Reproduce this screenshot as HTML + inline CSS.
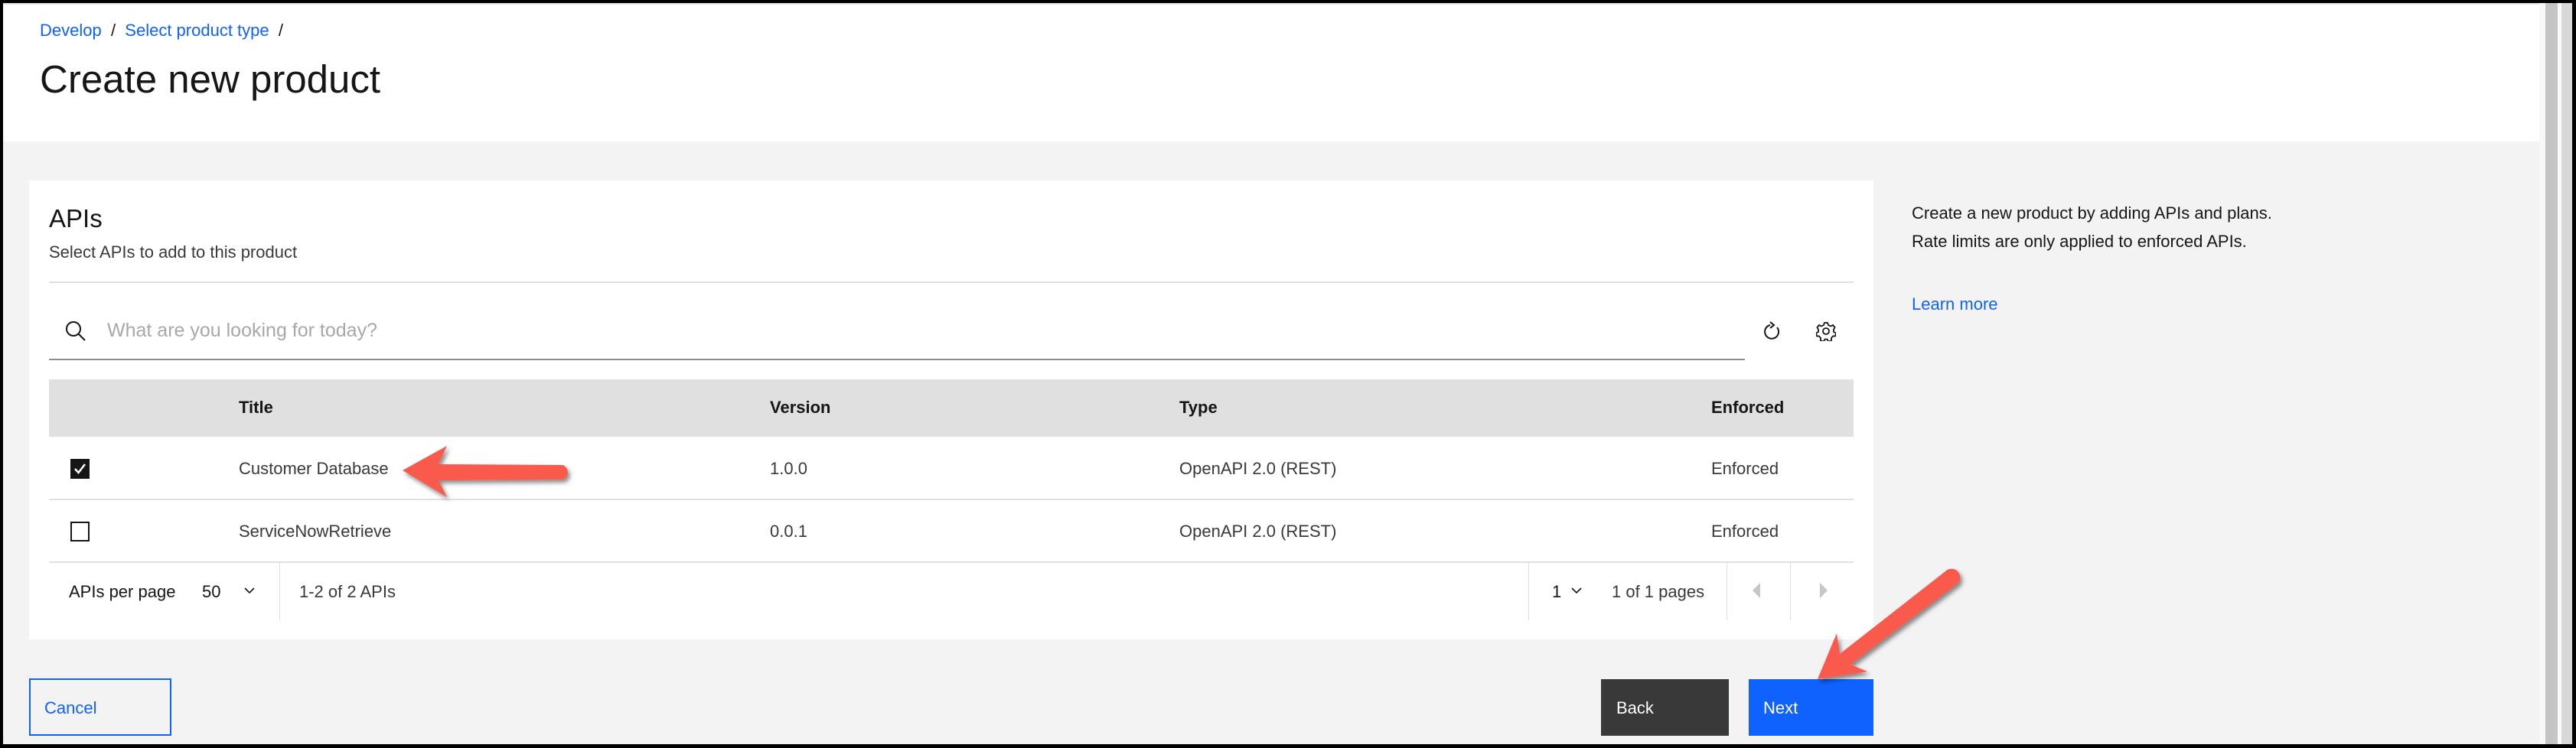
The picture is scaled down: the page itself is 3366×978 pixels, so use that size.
<!DOCTYPE html>
<html><head><meta charset="utf-8"><style>
*{margin:0;padding:0;box-sizing:border-box}
body{width:3366px;height:978px;background:#000;position:relative;overflow:hidden;font-family:"Liberation Sans",sans-serif;color:#161616}
.a{position:absolute;white-space:nowrap}
.t{font-size:22px;line-height:1}
</style></head><body>
<div class="a" style="left:4px;top:4px;width:3314px;height:969px;background:#f3f3f3"></div>
<div class="a" style="left:4px;top:4px;width:3314px;height:181px;background:#fff;border-top:2px solid #e4e4e4"></div>
<div class="a" style="left:3318px;top:4px;width:8px;height:969px;background:#f8f8f8"></div>
<div class="a" style="left:3326px;top:4px;width:16px;height:969px;background:#c4c4c4"></div>
<div class="a" style="left:3342px;top:4px;width:5px;height:969px;background:#fafafa"></div>
<div class="a" style="left:3347px;top:4px;width:14px;height:969px;background:#d8d8d8"></div>

<div class="a t" style="left:52px;top:29px;color:#0f62fe">Develop <span style="color:#161616">&nbsp;/&nbsp;</span> Select product type <span style="color:#161616">&nbsp;/</span></div>
<div class="a" style="left:52px;top:76px;font-size:51px;line-height:1.1">Create new product</div>

<div class="a" style="left:38px;top:236px;width:2410px;height:600px;background:#fff"></div>
<div class="a" style="left:64px;top:267px;font-size:33px">APIs</div>
<div class="a t" style="left:64px;top:319px;color:#393939">Select APIs to add to this product</div>
<div class="a" style="left:64px;top:368px;width:2358px;height:2px;background:#e0e0e0"></div>
<svg class="a" style="left:84px;top:418px" width="30" height="30" viewBox="0 0 30 30"><circle cx="12" cy="12" r="9" fill="none" stroke="#161616" stroke-width="2"/><path d="M18.5 18.5L27 27" stroke="#161616" stroke-width="2"/></svg>
<div class="a t" style="left:140px;top:420px;font-size:25px;color:#a8a8a8">What are you looking for today?</div>
<div class="a" style="left:64px;top:469px;width:2216px;height:2px;background:#8d8d8d"></div>
<svg class="a" style="left:2304px;top:420px" width="26" height="28" viewBox="0 0 26 28"><path d="M18 8A9 9 0 1 1 9 5" fill="none" stroke="#161616" stroke-width="2"/><path d="M9 1l5 4-5 4" fill="none" stroke="#161616" stroke-width="2"/></svg>
<svg class="a" style="left:2373px;top:420px" width="26" height="26" viewBox="0 0 26 26"><path d="M11 2h4l1 3 3 1.5 3-1.5 2.5 3-1.5 3v3l3 1.5-1 4-3 0-2 2.5v3.5l-4 1-1.5-3h-3l-1.5 3-4-1v-3.5l-2-2.5-3 0-1-4 3-1.5v-3l-1.5-3 2.5-3 3 1.5 3-1.5z" fill="none" stroke="#161616" stroke-width="1.8"/><circle cx="13" cy="13" r="4" fill="none" stroke="#161616" stroke-width="1.8"/></svg>

<div class="a" style="left:64px;top:496px;width:2358px;height:75px;background:#e0e0e0"></div>
<div class="a t" style="left:312px;top:522px;font-weight:bold">Title</div>
<div class="a t" style="left:1006px;top:522px;font-weight:bold">Version</div>
<div class="a t" style="left:1541px;top:522px;font-weight:bold">Type</div>
<div class="a t" style="left:2236px;top:522px;font-weight:bold">Enforced</div>

<div class="a" style="left:92px;top:600px;width:25px;height:26px;background:#161616"></div>
<svg class="a" style="left:92px;top:600px" width="25" height="26"><path d="M6 13l4.5 5L19 7" fill="none" stroke="#fff" stroke-width="2.5"/></svg>
<div class="a t" style="left:312px;top:602px;color:#393939">Customer Database</div>
<div class="a t" style="left:1006px;top:602px;color:#393939">1.0.0</div>
<div class="a t" style="left:1541px;top:602px;color:#393939">OpenAPI 2.0 (REST)</div>
<div class="a t" style="left:2236px;top:602px;color:#393939">Enforced</div>
<div class="a" style="left:64px;top:652px;width:2358px;height:2px;background:#e0e0e0"></div>
<div class="a" style="left:92px;top:682px;width:25px;height:26px;border:2px solid #161616"></div>
<div class="a t" style="left:312px;top:684px;color:#393939">ServiceNowRetrieve</div>
<div class="a t" style="left:1006px;top:684px;color:#393939">0.0.1</div>
<div class="a t" style="left:1541px;top:684px;color:#393939">OpenAPI 2.0 (REST)</div>
<div class="a t" style="left:2236px;top:684px;color:#393939">Enforced</div>
<div class="a" style="left:64px;top:734px;width:2358px;height:2px;background:#e0e0e0"></div>

<div class="a t" style="left:90px;top:763px">APIs per page</div>
<div class="a t" style="left:264px;top:763px">50</div>
<svg class="a" style="left:318px;top:764px" width="16" height="16"><path d="M2 5l6 6 6-6" fill="none" stroke="#161616" stroke-width="1.6"/></svg>
<div class="a" style="left:365px;top:736px;width:1px;height:75px;background:#e0e0e0"></div>
<div class="a t" style="left:391px;top:763px;color:#393939">1-2 of 2 APIs</div>
<div class="a" style="left:1997px;top:736px;width:1px;height:75px;background:#e0e0e0"></div>
<div class="a t" style="left:2028px;top:763px">1</div>
<svg class="a" style="left:2052px;top:764px" width="16" height="16"><path d="M2 5l6 6 6-6" fill="none" stroke="#161616" stroke-width="1.6"/></svg>
<div class="a t" style="left:2106px;top:763px;color:#393939">1 of 1 pages</div>
<div class="a" style="left:2256px;top:736px;width:1px;height:75px;background:#e0e0e0"></div>
<div class="a" style="left:2339px;top:736px;width:1px;height:75px;background:#e0e0e0"></div>
<svg class="a" style="left:2290px;top:762px" width="12" height="20"><path d="M10 0L0 10l10 10z" fill="#c6c6c6"/></svg>
<svg class="a" style="left:2376px;top:762px" width="12" height="20"><path d="M2 0l10 10L2 20z" fill="#c6c6c6"/></svg>

<div class="a t" style="left:2498px;top:268px;color:#161616">Create a new product by adding APIs and plans.</div>
<div class="a t" style="left:2498px;top:305px;color:#161616">Rate limits are only applied to enforced APIs.</div>
<div class="a t" style="left:2498px;top:387px;color:#0f62fe">Learn more</div>

<div class="a" style="left:38px;top:887px;width:186px;height:75px;border:2px solid #0f62fe;background:#f3f3f3"></div>
<div class="a t" style="left:58px;top:915px;color:#0f62fe">Cancel</div>
<div class="a" style="left:2092px;top:888px;width:167px;height:74px;background:#393939"></div>
<div class="a t" style="left:2112px;top:915px;color:#fff">Back</div>
<div class="a" style="left:2285px;top:888px;width:163px;height:74px;background:#0f62fe"></div>
<div class="a t" style="left:2304px;top:915px;color:#fff">Next</div>

<svg class="a" style="left:0;top:0" width="3366" height="978">
<defs><filter id="s" x="-20%" y="-20%" width="140%" height="140%"><feDropShadow dx="3" dy="4" stdDeviation="3" flood-color="#000" flood-opacity="0.45"/></filter></defs>
<g filter="url(#s)" fill="#fa5a4b">
<path d="M526 615L584 583L573 607L735 608A10 10 0 0 1 735 627L573 628L584 650Z"/>
<path d="M2375 888L2400 828L2404 855L2542 747A10 10 0 0 1 2558 763L2418 869L2440 878Z"/>
</g></svg>
</body></html>
